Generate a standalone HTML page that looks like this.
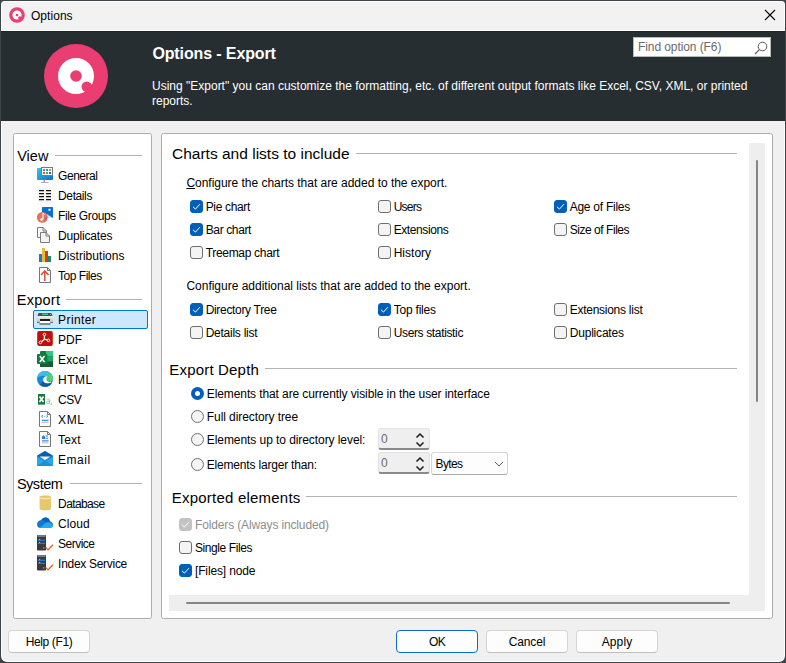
<!DOCTYPE html>
<html><head><meta charset="utf-8">
<style>
*{box-sizing:border-box;margin:0;padding:0}
html,body{width:786px;height:663px;overflow:hidden;background:#3f4448}
body{position:relative;font-family:"Liberation Sans",sans-serif;font-size:12px;color:#000}
.a{position:absolute}
.t{position:absolute;white-space:nowrap;font-size:12px;line-height:16px}
.h{position:absolute;white-space:nowrap;font-size:15px;line-height:18px;color:#000}
.hl{position:absolute;height:1px;background:#b3b3b3}
#frame{position:absolute;left:0;top:0;width:786px;height:663px;border:1px solid #3f4448;border-radius:4px 4px 7px 7px;box-shadow:0 0 0 8px #3f4448}
#bodybg{position:absolute;left:1px;top:121px;width:784px;height:541px;background:#f0f0f0;box-shadow:inset 1px 0 0 #fff,inset -1px 0 0 #fff,inset 0 -1px 0 #fff;border-radius:0 0 6px 6px}
#title{position:absolute;left:1px;top:1px;width:784px;height:30px;background:#f2f2f2;box-shadow:inset 1px 1px 0 #fff,inset -1px 0 0 #fff;border-radius:3px 3px 0 0}
#titlewhite{position:absolute;left:1px;top:30px;width:784px;height:1px;background:#fff}
#hdr{position:absolute;left:1px;top:31px;width:784px;height:90px;background:#272e31;border-top:1px solid #1e2528}
.panel{position:absolute;background:#fff;border:1px solid #acacac;border-radius:2.5px}
.cb{position:absolute;width:13px;height:13px;border-radius:3px;border:1px solid #6f6f6f;background:#f4f4f4}
.cb.on{background:#005fb8;border-color:#005fb8}
.cb.dis{background:#c3c3c3;border-color:#c3c3c3}
.cb svg{position:absolute;left:-1px;top:-1px}
.rd{position:absolute;width:13px;height:13px;border-radius:50%;border:1px solid #6f6f6f;background:#f4f4f4}
.rd.on{border:4px solid #005fb8;background:#fff}
.btn{position:absolute;height:23px;width:82px;background:#fdfdfd;border:1px solid #d4d4d4;border-bottom-color:#c0c0c0;border-radius:4px;text-align:center;line-height:21px;padding-top:1px;font-size:12px}
.ico{position:absolute;width:16px;height:16px}
</style></head><body>
<div id="bodybg"></div><div id="title"></div><div id="titlewhite"></div>
<svg class="a" style="left:9px;top:7px" width="16" height="16" viewBox="0 0 16 16">
<circle cx="8" cy="8" r="7.8" fill="#ea3d72"/><circle cx="8" cy="8" r="4.6" fill="#fff"/>
<circle cx="8" cy="8" r="1.3" fill="#ea3d72"/><circle cx="10.8" cy="10.8" r="1.6" fill="#ea3d72"/></svg>
<div class="t" style="left:31px;top:8px;letter-spacing:0.041px">Options</div>
<svg class="a" style="left:764px;top:9px" width="12" height="12" viewBox="0 0 12 12"><path d="M1 1L11 11M11 1L1 11" stroke="#000" stroke-width="1.1"/></svg>
<div id="hdr"></div>
<svg class="a" style="left:44px;top:44px" width="64" height="64" viewBox="0 0 64 64">
<circle cx="32" cy="32" r="32" fill="#ea3d72"/><circle cx="32" cy="32" r="18" fill="#fff"/>
<circle cx="32" cy="32" r="5.8" fill="#ea3d72"/><circle cx="42.8" cy="42.8" r="5.3" fill="#ea3d72"/></svg>
<div class="a" style="left:152.4px;top:44.2px;font-size:16px;line-height:20px;font-weight:bold;letter-spacing:-0.12px;color:#fff;white-space:nowrap">Options - Export</div>
<div class="a" style="left:152px;top:79.3px;font-size:12px;line-height:15px;color:#fff;white-space:nowrap">Using "Export" you can customize the formatting, etc. of different output formats like Excel, CSV, XML, or printed<br>reports.</div>
<div class="a" style="left:633px;top:37px;width:138px;height:20px;background:#fff;border:1px solid #b9b9b9"></div>
<div class="t" style="left:638px;top:39px;color:#6b6b6b;letter-spacing:-0.087px">Find option (F6)</div>
<svg class="a" style="left:753px;top:40px" width="16" height="16" viewBox="0 0 16 16">
<circle cx="9.5" cy="6.5" r="4.3" fill="none" stroke="#555" stroke-width="1"/><path d="M6.4 9.6L2 14" stroke="#555" stroke-width="1.1"/></svg>
<div class="panel" style="left:13px;top:133px;width:139px;height:486px"></div>
<div class="h" style="left:17.2px;top:147.3px;font-size:14.5px;letter-spacing:0.002px">View</div><div class="hl" style="left:55px;top:155px;width:87px"></div>
<div class="h" style="left:16.8px;top:291.2px;font-size:14.5px;letter-spacing:0.244px">Export</div><div class="hl" style="left:66px;top:299px;width:76px"></div>
<div class="h" style="left:16.9px;top:475.3px;font-size:14.5px;letter-spacing:-0.473px">System</div><div class="hl" style="left:70px;top:483px;width:72px"></div>
<div class="a" style="left:33px;top:310px;width:115px;height:19px;background:#cce8ff;border:1px solid #0078d4;border-radius:2px"></div>
<svg class="ico" style="left:37px;top:167px" width="16" height="16" viewBox="0 0 16 16"><defs><linearGradient id="gm0" x1="0" y1="0" x2="1" y2="1"><stop offset="0" stop-color="#36c6e6"/><stop offset="1" stop-color="#0b72c8"/></linearGradient></defs>
<rect x="0" y="1" width="16" height="12" rx="1" fill="url(#gm0)"/>
<rect x="4.5" y="0.5" width="11" height="8" fill="#fff" stroke="#7a7a7a"/>
<rect x="6" y="2" width="2" height="2" fill="#8a6fc7"/><rect x="9" y="2" width="2" height="2" fill="#16a79a"/><rect x="12" y="2" width="2" height="2" fill="#f48a1c"/>
<rect x="6" y="5" width="2" height="2" fill="#f2531e"/><rect x="9" y="5" width="2" height="2" fill="#2dc63e"/><rect x="12" y="5" width="2" height="2" fill="#0a78d7"/>
<rect x="6.5" y="13" width="1.5" height="2" fill="#9aa4ad"/><rect x="4" y="15" width="7.5" height="1" fill="#a9b2c9"/></svg>
<div class="t" style="left:58.1px;top:168px;letter-spacing:-0.471px">General</div>
<svg class="ico" style="left:37px;top:187px" width="16" height="16" viewBox="0 0 16 16"><rect x="0" y="0" width="16" height="16" fill="#f6f6f6"/>
<g stroke="#111" stroke-width="1.2"><path d="M2 3.6H7M9 3.6H14M2 6.6H7M9 6.6H14M2 9.6H7M9 9.6H14M2 12.6H7M9 12.6H14"/></g></svg>
<div class="t" style="left:58.1px;top:188px;letter-spacing:-0.397px">Details</div>
<svg class="ico" style="left:37px;top:207px" width="16" height="16" viewBox="0 0 16 16"><rect x="5" y="0" width="11" height="11" rx="0.5" fill="#0a6fd0"/>
<path d="M8 6L16 11V11H9Z" fill="#cfe6f9"/><rect x="11.5" y="1.8" width="2" height="2" fill="#fff"/>
<circle cx="5.3" cy="10.4" r="5.4" fill="#e57459"/>
<path d="M7.5 14A5.4 5.4 0 0 0 10.5 9.5L8 11Z" fill="#a25bb0"/>
<path d="M6 5.8V12.4" stroke="#fff" stroke-width="1"/><circle cx="4.6" cy="12.6" r="1.3" fill="#fff"/><path d="M6 6L7.5 7.5" stroke="#fff" stroke-width="1"/></svg>
<div class="t" style="left:58.1px;top:208px;letter-spacing:-0.382px">File Groups</div>
<svg class="ico" style="left:37px;top:227px" width="16" height="16" viewBox="0 0 16 16"><path d="M0.5 0.5H6L9.5 4V10.5H0.5Z" fill="#f7f7f7" stroke="#7b7b7b"/><path d="M6 0.5V4H9.5" fill="none" stroke="#7b7b7b"/>
<path d="M3.5 5.5H9L12.5 9V15.5H3.5Z" fill="#f3f3f3" stroke="#7b7b7b"/><path d="M9 5.5V9H12.5" fill="none" stroke="#7b7b7b"/></svg>
<div class="t" style="left:58.1px;top:228px;letter-spacing:-0.192px">Duplicates</div>
<svg class="ico" style="left:37px;top:247px" width="16" height="16" viewBox="0 0 16 16"><rect x="2" y="7" width="3" height="8" fill="#1b7fb4"/><rect x="5" y="1" width="3" height="14" fill="#e9b83c"/>
<rect x="8" y="4" width="3" height="11" fill="#c9411b"/><rect x="11" y="9" width="3" height="6" fill="#1f8a6a"/></svg>
<div class="t" style="left:58.1px;top:248px;letter-spacing:0.031px">Distributions</div>
<svg class="ico" style="left:37px;top:267px" width="16" height="16" viewBox="0 0 16 16"><path d="M2.5 0.5H10.5L13.5 3.5V15.5H2.5Z" fill="#fbfbfb" stroke="#767676"/><path d="M10.5 0.5V3.5H13.5" fill="none" stroke="#767676"/>
<path d="M7.8 4V14" stroke="#d9442e" stroke-width="1.4"/><path d="M4 8L7.8 4L11.6 8" fill="none" stroke="#d9442e" stroke-width="1.4"/></svg>
<div class="t" style="left:58.1px;top:268px;letter-spacing:-0.490px">Top Files</div>
<svg class="ico" style="left:37px;top:311px" width="16" height="16" viewBox="0 0 16 16"><defs><linearGradient id="gp6" x1="0" y1="0" x2="0" y2="1"><stop offset="0" stop-color="#f4f4f4"/><stop offset="1" stop-color="#b4b4b4"/></linearGradient></defs>
<path d="M1.5 2H14.5L15.5 5H0.5Z" fill="#4d4d4d"/><rect x="5" y="2.6" width="6" height="1.2" fill="#3fd3c6"/><rect x="13" y="3" width="1" height="1" fill="#5fe070"/>
<rect x="0" y="5" width="16" height="7" rx="0.8" fill="url(#gp6)"/><rect x="0" y="11" width="16" height="1" fill="#6a6a6a"/><rect x="3" y="8" width="10" height="2" fill="#1e1e1e"/>
<path d="M3 10H13L13.5 12.5H2.5Z" fill="#fff"/><rect x="2.5" y="12.5" width="11" height="1" fill="#2b2b2b"/></svg>
<div class="t" style="left:58.1px;top:311.6px;letter-spacing:0.392px">Printer</div>
<svg class="ico" style="left:37px;top:331px" width="16" height="16" viewBox="0 0 16 16"><rect x="0.2" y="0.1" width="15.6" height="15" rx="2" fill="#bf0f08"/>
<path d="M7.4 4.8V8.2M7.4 8.2L4.4 10.7M7.4 8.2L10.1 9" stroke="#fff" stroke-width="1.3"/>
<circle cx="7.4" cy="3.5" r="1.3" fill="#bf0f08" stroke="#fff" stroke-width="1"/><circle cx="3.4" cy="11.4" r="1.3" fill="#bf0f08" stroke="#fff" stroke-width="1"/><circle cx="11.4" cy="9.3" r="1.3" fill="#bf0f08" stroke="#fff" stroke-width="1"/></svg>
<div class="t" style="left:58.1px;top:331.6px;letter-spacing:0.015px">PDF</div>
<svg class="ico" style="left:37px;top:351px" width="16" height="16" viewBox="0 0 16 16"><rect x="3" y="0" width="13" height="16" rx="1" fill="#107c41"/><rect x="9" y="0" width="7" height="5.3" fill="#33c481"/><rect x="9" y="5.3" width="7" height="5.3" fill="#21a366"/><rect x="3" y="10.6" width="13" height="5.4" fill="#185c37"/>
<rect x="0" y="3" width="10.3" height="10" rx="0.8" fill="#107c41"/>
<path d="M2.8 5L7.5 11M7.5 5L2.8 11" stroke="#fff" stroke-width="1.6"/></svg>
<div class="t" style="left:58.1px;top:351.6px;letter-spacing:0.131px">Excel</div>
<svg class="ico" style="left:37px;top:371px" width="16" height="16" viewBox="0 0 16 16"><circle cx="8" cy="8" r="8" fill="#1b86d9"/>
<path d="M0.2 7C0.8 2.8 4.2 0 8 0C11.8 0 15 2.6 15.8 6.2C13 4.2 10.5 4.2 8.5 5C5.5 4.2 2.5 5 0.2 7Z" fill="#38bfe8"/>
<circle cx="12" cy="7" r="3.8" fill="#45cd7e"/><path d="M12.5 3.2C14.5 3.6 15.8 5.5 15.8 7.5C15.8 9.5 14.5 10.8 12.5 10.8Z" fill="#52d65e"/>
<path d="M9.8 5.4C7.2 5.2 5.6 7.4 5.9 9.6C6.3 12.2 9.8 13.4 14.8 11.6C12.5 11.4 10.8 11 9.8 9.8C9 8.8 9.2 6.8 10.5 5.6Z" fill="#fff"/>
<path d="M3 13.6C5 16 9.5 16.6 12.6 14.6C13.6 13.9 14.4 13 14.8 11.6C10.5 13.4 6.6 12.6 5.9 9.6C5.3 11.4 4 12.8 3 13.6Z" fill="#0e58a8"/></svg>
<div class="t" style="left:58.1px;top:371.6px;letter-spacing:0.503px">HTML</div>
<svg class="ico" style="left:37px;top:391px" width="16" height="16" viewBox="0 0 16 16"><rect x="1" y="3" width="7" height="10.6" fill="#137a3f"/>
<path d="M2.5 5.5L6.5 11M6.5 5.5L2.5 11" stroke="#fff" stroke-width="1.6"/>
<path d="M9.6 8.4C10.4 7.8 12.6 7.8 12.6 9.2V12.7M12.6 10.2C11 10 9.6 10.4 9.6 11.5C9.6 12.8 11.6 12.8 12.6 11.6M14.6 12.2L14 14" fill="none" stroke="#6cbf94" stroke-width="0.8"/></svg>
<div class="t" style="left:58.1px;top:391.6px;letter-spacing:-0.485px">CSV</div>
<svg class="ico" style="left:37px;top:411px" width="16" height="16" viewBox="0 0 16 16"><path d="M2.5 0.5H10.5L13.5 3.5V15.5H2.5Z" fill="#fbfbfb" stroke="#767676"/><path d="M10.5 0.5V3.5H13.5" fill="none" stroke="#767676"/>
<path d="M6 4.2L4.5 5.3L6 6.4M9.5 4.2L11 5.3L9.5 6.4" fill="none" stroke="#3a86d6" stroke-width="0.9"/><rect x="7.3" y="4.9" width="0.9" height="0.9" fill="#3a86d6"/>
<rect x="5" y="8.8" width="6.5" height="1.1" fill="#2f7fd8"/><rect x="5" y="10.8" width="6.5" height="1" fill="#b9b9b9"/></svg>
<div class="t" style="left:58.1px;top:411.6px;letter-spacing:0.550px">XML</div>
<svg class="ico" style="left:37px;top:431px" width="16" height="16" viewBox="0 0 16 16"><path d="M2.5 0.5H10.5L13.5 3.5V15.5H2.5Z" fill="#fbfbfb" stroke="#767676"/><path d="M10.5 0.5V3.5H13.5" fill="none" stroke="#767676"/>
<path d="M5 8V5.5L6.5 4.2L8 5.5V8Z" fill="#2f7fd8"/><rect x="8.5" y="4.5" width="2.5" height="1" fill="#2f8ee0"/><rect x="8.5" y="6.8" width="2.5" height="1" fill="#2f8ee0"/>
<rect x="5" y="9.3" width="6.5" height="1.1" fill="#2f7fd8"/><rect x="5" y="11.3" width="6.5" height="1" fill="#b9b9b9"/></svg>
<div class="t" style="left:58.1px;top:431.6px;letter-spacing:0.175px">Text</div>
<svg class="ico" style="left:37px;top:451px" width="16" height="16" viewBox="0 0 16 16"><path d="M0 5L8 0L16 5V15H0Z" fill="#1b8fe0"/>
<path d="M0 4.8L8 0L16 4.8L8 9Z" fill="#0a5fb0"/>
<path d="M2.5 5.5H13.5L8 9.2Z" fill="#f4f1ee"/>
<path d="M0 15V6L8 11L16 6V15Z" fill="#28a8ea"/><path d="M0 15L8 9.5L16 15Z" fill="#1490df"/></svg>
<div class="t" style="left:58.1px;top:451.6px;letter-spacing:0.515px">Email</div>
<svg class="ico" style="left:37px;top:495px" width="16" height="16" viewBox="0 0 16 16"><path d="M2.6 1.8C2.6 0 14 0 14 1.8V14C14 15.8 2.6 15.8 2.6 14Z" fill="#e6c76c"/>
<path d="M3 2.8C4.5 4 12.5 4 13.8 2.8" fill="none" stroke="#fff5da" stroke-width="0.9"/></svg>
<div class="t" style="left:58.1px;top:495.6px;letter-spacing:-0.628px">Database</div>
<svg class="ico" style="left:37px;top:515px" width="16" height="16" viewBox="0 0 16 16"><path d="M3.5 12.9C1.5 12.9 0 11.5 0 9.5C0 7.2 1.8 5.2 4.4 5C5.2 3.4 6.8 2.5 8.5 2.5C10.8 2.5 12.5 4.2 12.8 6.3C14.7 6.5 16 8 16 9.8C16 11.6 14.8 12.9 13 12.9Z" fill="#0f78d4"/>
<path d="M4.4 5C5.2 3.4 6.8 2.5 8.5 2.5C10.8 2.5 12.5 4.2 12.8 6.3L12.6 7.6C11.5 7 10 7.1 9 7.8L7.5 6.2C6.5 5.3 5.5 5 4.4 5Z" fill="#0364b8"/>
<path d="M2.6 12.9L9 7.8C10 7.1 11.5 7 12.6 7.6L16 10C16 11.6 14.8 12.9 13 12.9Z" fill="#28a8ea"/></svg>
<div class="t" style="left:58.1px;top:515.6px;letter-spacing:0.030px">Cloud</div>
<svg class="ico" style="left:37px;top:535px" width="16" height="16" viewBox="0 0 16 16"><rect x="0" y="0" width="9" height="15.6" rx="0.8" fill="#3a3a3a"/><rect x="0.5" y="0" width="8" height="2" fill="#7a7a7a"/>
<rect x="1" y="4.7" width="7" height="1.1" fill="#1f86f0"/><rect x="1" y="7.8" width="7" height="1.1" fill="#1f86f0"/>
<rect x="2" y="3.8" width="1.2" height="1" fill="#8cc8ff"/><rect x="2" y="6.9" width="1.2" height="1" fill="#8cc8ff"/><rect x="6" y="12.3" width="1.3" height="1.3" fill="#4fb4ff"/>
<path d="M8.6 12.4L11 14.9L16 9.8" fill="none" stroke="#ea5a14" stroke-width="1.3"/></svg>
<div class="t" style="left:58.1px;top:535.6px;letter-spacing:-0.523px">Service</div>
<svg class="ico" style="left:37px;top:555px" width="16" height="16" viewBox="0 0 16 16"><rect x="0" y="0" width="9" height="15.6" rx="0.8" fill="#3a3a3a"/><rect x="0.5" y="0" width="8" height="2" fill="#7a7a7a"/>
<rect x="1" y="4.7" width="7" height="1.1" fill="#1f86f0"/><rect x="1" y="7.8" width="7" height="1.1" fill="#1f86f0"/>
<rect x="2" y="3.8" width="1.2" height="1" fill="#8cc8ff"/><rect x="2" y="6.9" width="1.2" height="1" fill="#8cc8ff"/><rect x="6" y="12.3" width="1.3" height="1.3" fill="#4fb4ff"/>
<path d="M8.6 12.4L11 14.9L16 9.8" fill="none" stroke="#ea5a14" stroke-width="1.3"/></svg>
<div class="t" style="left:58.1px;top:555.6px;letter-spacing:-0.294px">Index Service</div>
<div class="panel" style="left:161px;top:133px;width:612px;height:486px"></div>
<div class="h" style="left:172px;top:145.3px;font-size:15.5px;letter-spacing:0.005px">Charts and lists to include</div><div class="hl" style="left:356px;top:153px;width:381px"></div>
<div class="t" style="left:186.4px;top:174.6px;letter-spacing:-0.025px"><u>C</u>onfigure the charts that are added to the export.</div>
<div class="cb on" style="left:190px;top:200px"><svg width="13" height="13" viewBox="0 0 13 13"><path d="M3 6.8L5.4 9.1L9.9 4.2" fill="none" stroke="#fff" stroke-width="1"/></svg></div><div class="t" style="left:205.7px;top:199px;letter-spacing:-0.340px">Pie chart</div>
<div class="cb on" style="left:190px;top:223px"><svg width="13" height="13" viewBox="0 0 13 13"><path d="M3 6.8L5.4 9.1L9.9 4.2" fill="none" stroke="#fff" stroke-width="1"/></svg></div><div class="t" style="left:205.7px;top:222px;letter-spacing:-0.369px">Bar chart</div>
<div class="cb " style="left:190px;top:246px"></div><div class="t" style="left:205.7px;top:245px;letter-spacing:-0.312px">Treemap chart</div>
<div class="cb " style="left:378px;top:200px"></div><div class="t" style="left:393.7px;top:199px;letter-spacing:-0.750px">Users</div>
<div class="cb " style="left:378px;top:223px"></div><div class="t" style="left:393.7px;top:222px;letter-spacing:-0.411px">Extensions</div>
<div class="cb " style="left:378px;top:246px"></div><div class="t" style="left:393.7px;top:245px;letter-spacing:0.011px">History</div>
<div class="cb on" style="left:554px;top:200px"><svg width="13" height="13" viewBox="0 0 13 13"><path d="M3 6.8L5.4 9.1L9.9 4.2" fill="none" stroke="#fff" stroke-width="1"/></svg></div><div class="t" style="left:569.7px;top:199px;letter-spacing:-0.251px">Age of Files</div>
<div class="cb " style="left:554px;top:223px"></div><div class="t" style="left:569.7px;top:222px;letter-spacing:-0.455px">Size of Files</div>
<div class="t" style="left:186.4px;top:277.5px;letter-spacing:-0.009px">Configure additional lists that are added to the export.</div>
<div class="cb on" style="left:190px;top:303px"><svg width="13" height="13" viewBox="0 0 13 13"><path d="M3 6.8L5.4 9.1L9.9 4.2" fill="none" stroke="#fff" stroke-width="1"/></svg></div><div class="t" style="left:205.7px;top:302px;letter-spacing:-0.323px">Directory Tree</div>
<div class="cb on" style="left:378px;top:303px"><svg width="13" height="13" viewBox="0 0 13 13"><path d="M3 6.8L5.4 9.1L9.9 4.2" fill="none" stroke="#fff" stroke-width="1"/></svg></div><div class="t" style="left:393.7px;top:302px;letter-spacing:-0.215px">Top files</div>
<div class="cb " style="left:554px;top:303px"></div><div class="t" style="left:569.7px;top:302px;letter-spacing:-0.262px">Extensions list</div>
<div class="cb " style="left:190px;top:326px"></div><div class="t" style="left:205.7px;top:325px;letter-spacing:-0.259px">Details list</div>
<div class="cb " style="left:378px;top:326px"></div><div class="t" style="left:393.7px;top:325px;letter-spacing:-0.356px">Users statistic</div>
<div class="cb " style="left:554px;top:326px"></div><div class="t" style="left:569.7px;top:325px;letter-spacing:-0.192px">Duplicates</div>
<div class="h" style="left:169.3px;top:360.5px;letter-spacing:0.181px">Export Depth</div><div class="hl" style="left:265px;top:368px;width:472px"></div>
<div class="rd on" style="left:191px;top:387px"></div><div class="t" style="left:206.8px;top:386px;letter-spacing:-0.101px">Elements that are currently visible in the user interface</div>
<div class="rd" style="left:191px;top:410px"></div><div class="t" style="left:206.8px;top:409px;letter-spacing:-0.079px">Full directory tree</div>
<div class="rd" style="left:191px;top:433px"></div><div class="t" style="left:206.8px;top:432px;letter-spacing:-0.070px">Elements up to directory level:</div>
<div class="rd" style="left:191px;top:458px"></div><div class="t" style="left:206.8px;top:457px;letter-spacing:-0.191px">Elements larger than:</div>
<div class="a" style="left:378px;top:428px;width:52px;height:22px;background:#efefef;border:1px solid #e3e3e3;border-bottom:2px solid #8a8a8a;border-radius:3px"></div>
<div class="t" style="left:381px;top:431px;color:#6d6d6d">0</div>
<svg class="a" style="left:415px;top:432px" width="10" height="16" viewBox="0 0 10 16"><path d="M1.5 5.5L5 2L8.5 5.5M1.5 10.5L5 14L8.5 10.5" fill="none" stroke="#1a1a1a" stroke-width="1.5"/></svg>
<div class="a" style="left:378px;top:452px;width:52px;height:22px;background:#efefef;border:1px solid #e3e3e3;border-bottom:2px solid #8a8a8a;border-radius:3px"></div>
<div class="t" style="left:381px;top:455px;color:#6d6d6d">0</div>
<svg class="a" style="left:415px;top:456px" width="10" height="16" viewBox="0 0 10 16"><path d="M1.5 5.5L5 2L8.5 5.5M1.5 10.5L5 14L8.5 10.5" fill="none" stroke="#1a1a1a" stroke-width="1.5"/></svg>
<div class="a" style="left:431px;top:452px;width:77px;height:23px;background:#fdfdfd;border:1px solid #d6d6d6;border-bottom-color:#a9a9a9;border-radius:3px"></div>
<div class="t" style="left:435.5px;top:456px;letter-spacing:-0.628px">Bytes</div>
<svg class="a" style="left:494px;top:460px" width="10" height="8" viewBox="0 0 10 8"><path d="M1 2L5 6L9 2" fill="none" stroke="#5a5a5a" stroke-width="1"/></svg>
<div class="h" style="left:171.8px;top:488.9px;letter-spacing:0.214px">Exported elements</div><div class="hl" style="left:306px;top:496px;width:431px"></div>
<div class="cb dis" style="left:179px;top:518px"><svg width="13" height="13" viewBox="0 0 13 13"><path d="M3 6.8L5.4 9.1L9.9 4.2" fill="none" stroke="#fff" stroke-width="1"/></svg></div><div class="t" style="left:195px;top:517px;color:#8d8d8d;letter-spacing:-0.141px">Folders (Always included)</div>
<div class="cb " style="left:179px;top:541px"></div><div class="t" style="left:195px;top:540px;letter-spacing:-0.412px">Single Files</div>
<div class="cb on" style="left:179px;top:564px"><svg width="13" height="13" viewBox="0 0 13 13"><path d="M3 6.8L5.4 9.1L9.9 4.2" fill="none" stroke="#fff" stroke-width="1"/></svg></div><div class="t" style="left:195px;top:563px;letter-spacing:-0.151px">[Files] node</div>
<div class="a" style="left:749px;top:143px;width:16px;height:468px;background:#eeeeee"></div>
<div class="a" style="left:169px;top:595px;width:596px;height:16px;background:#eeeeee"></div>
<div class="a" style="left:756px;top:160px;width:2px;height:242px;background:#858585;border-radius:1px"></div>
<div class="a" style="left:186px;top:602px;width:544px;height:2px;background:#858585;border-radius:1px"></div>
<div class="btn" style="left:8px;top:630px;letter-spacing:-0.364px">Help (F1)</div>
<div class="btn" style="left:396px;top:630px;border-color:#0a6cd0;letter-spacing:-0.750px">OK</div>
<div class="btn" style="left:486px;top:630px;letter-spacing:-0.158px">Cancel</div>
<div class="btn" style="left:576px;top:630px;letter-spacing:0.146px">Apply</div>
<div id="frame"></div>
</body></html>
